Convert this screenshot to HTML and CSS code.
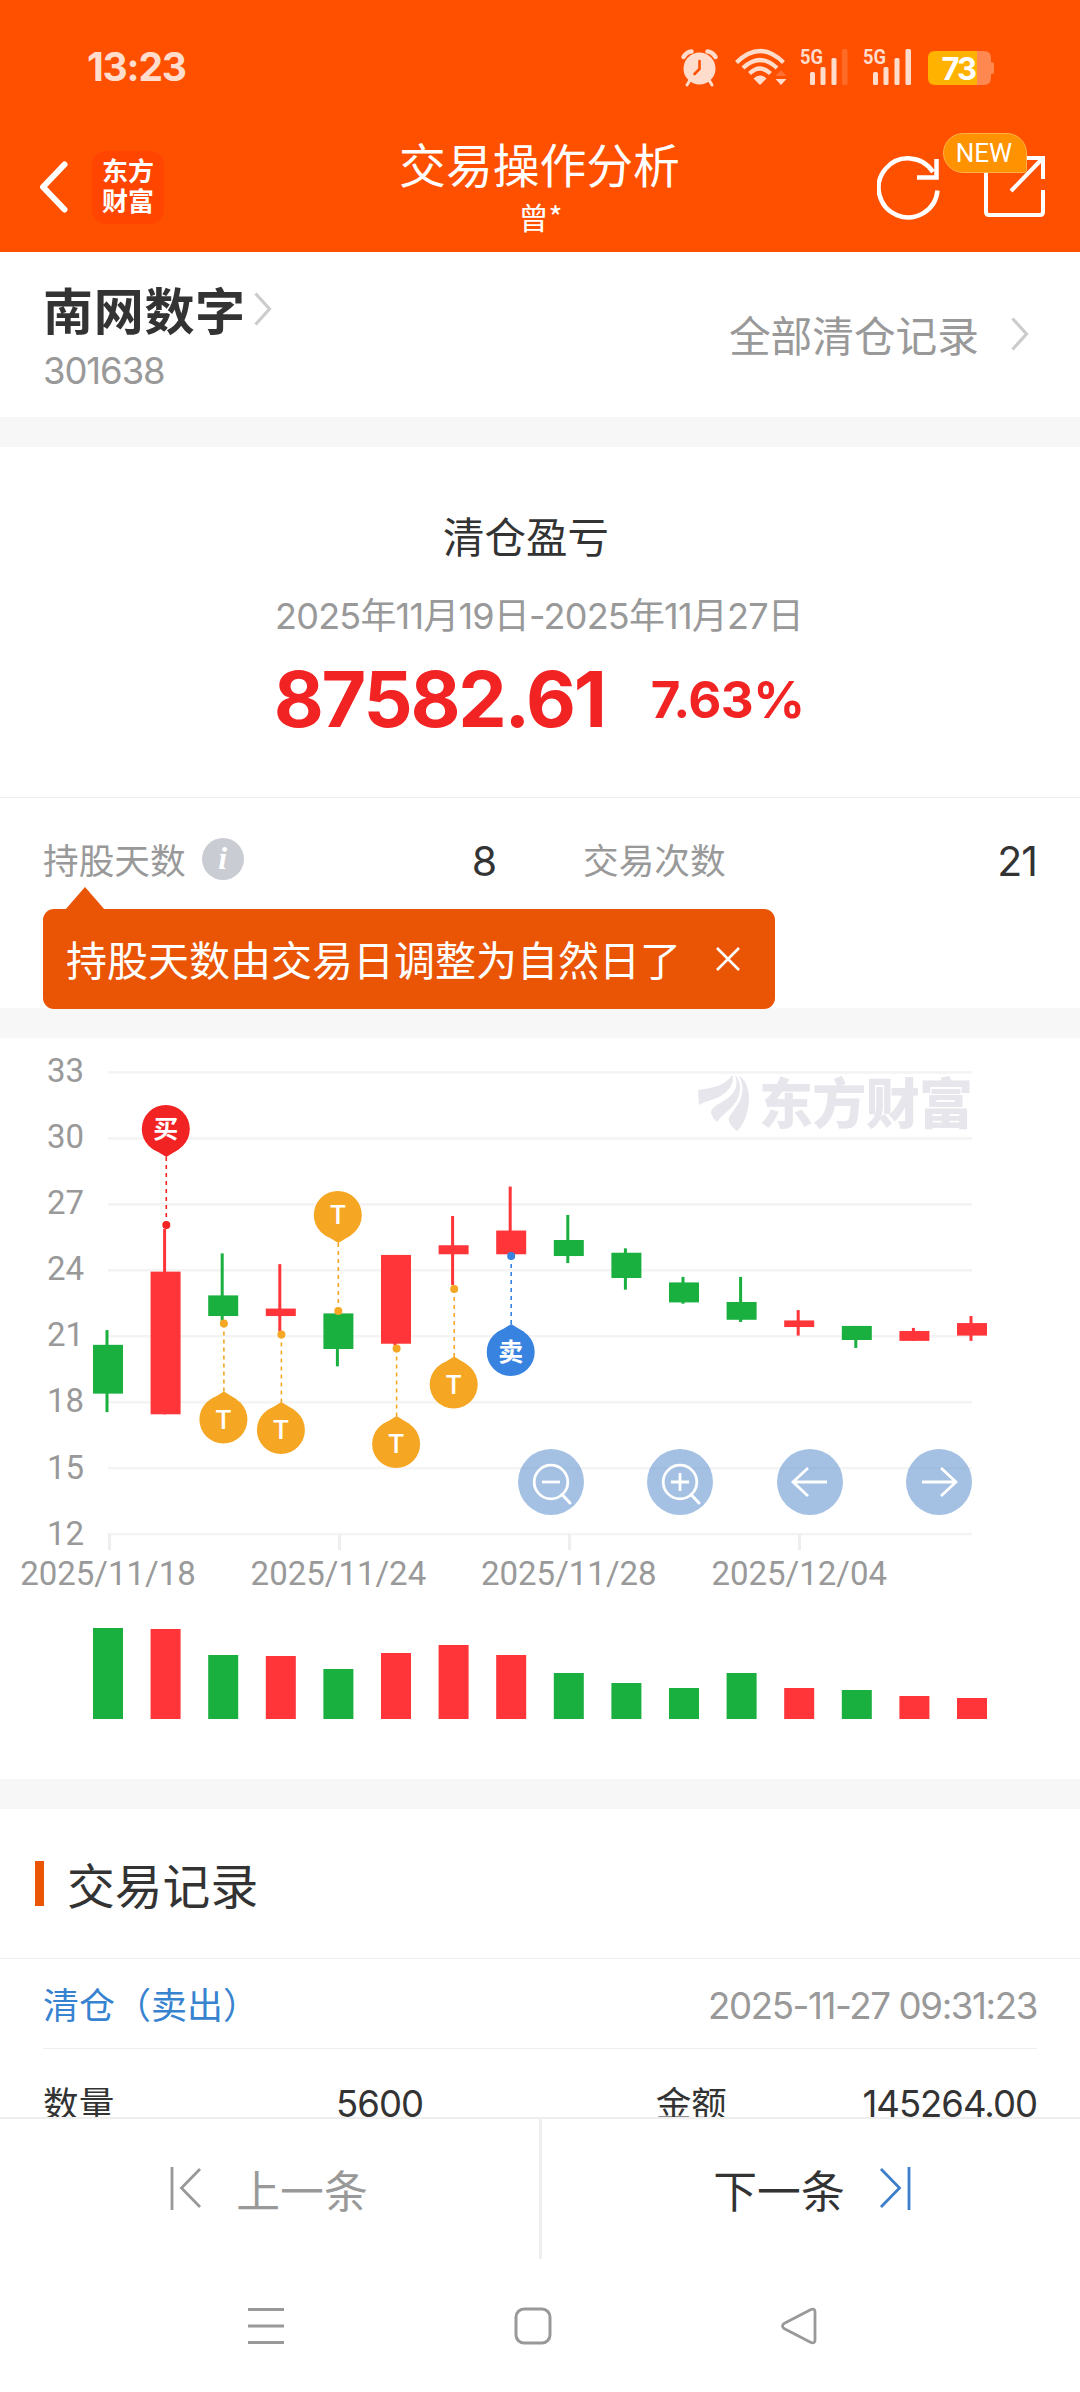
FILE: index.html
```
<!DOCTYPE html>
<html lang="zh-CN">

<head>
    <meta charset="UTF-8">
    <meta name="viewport" content="width=device-width, initial-scale=1.0">
    <title>交易操作分析</title>
    <link rel="stylesheet" href="styles.css">
</head>

<body>
    <div class="page">
        <header class="header">
            <div class="statusbar">
                <span class="time">13:23</span>
                <svg class="status-icons" width="320" height="60" viewBox="670 40 320 60">
                    <!-- alarm -->
                    <g fill="#ffdccc">
                        <circle cx="699.5" cy="68.5" r="16"/>
                        <path d="M683.500 57q3.500-5.500 8-5.500M715.500 57q-3.500-5.500-8-5.500" stroke="#ffdccc" stroke-width="4.500" fill="none" stroke-linecap="round"/>
                        <path d="M690 80l-3 5M709 80l3 5" stroke="#ffdccc" stroke-width="3" stroke-linecap="round"/>
                        <path d="M699.5 61v8l-5 5" stroke="#ff5000" stroke-width="2.6" fill="none" stroke-linecap="round"/>
                    </g>
                    <!-- wifi -->
                    <g fill="none" stroke="#ffdccc" stroke-width="4.2">
                        <path d="M736.5 62.5q23.500-23 47 0"/>
                        <path d="M743 68q17-16 34 0"/>
                        <path d="M749.500 73.500q10.500-10 21 0"/>
                    </g>
                    <path d="M753.500 78.500q6.500-6 13 0l-6.500 6.500z" fill="#ffdccc"/>
                    <path d="M775.500 76h11l-5.500-6z" fill="#ff7033"/>
                    <path d="M775.500 79h11l-5.500 6z" fill="#ffdccc"/>
                    <!-- signal -->
                    <g fill="#ffdccc">
                        <rect x="810" y="72" width="5" height="13" rx="1.500"/>
                        <rect x="820.500" y="67" width="5" height="18" rx="1.500"/>
                        <rect x="831.500" y="58" width="5" height="27" rx="1.500"/>
                        <rect x="842" y="49" width="5.500" height="36" rx="1.500" fill="#ff6a26"/>
                        <rect x="873" y="72" width="5" height="13" rx="1.500"/>
                        <rect x="883.500" y="67" width="5" height="18" rx="1.500"/>
                        <rect x="894.500" y="58" width="5" height="27" rx="1.500"/>
                        <rect x="905.500" y="49" width="5.500" height="36" rx="1.500"/>
                        <text class="net" x="800" y="63.500" textLength="23" lengthAdjust="spacingAndGlyphs">5G</text>
                        <text class="net" x="863" y="63.500" textLength="23" lengthAdjust="spacingAndGlyphs">5G</text>
                    </g>
                    <!-- battery -->
                    <path d="M977 51h7q7 0 7 7v4q3 0 3 2v8q0 2-3 2v4q0 7-7 7h-7z" fill="#ff8850"/>
                    <path d="M977 51h-42q-7 0-7 7v20q0 7 7 7h42z" fill="#ffb300"/>
                    <text class="battery" x="941.500" y="79.500">73</text>
                </svg>
            </div>
            <div class="navbar">
                <div class="nav-left">
                    <svg width="32" height="56" viewBox="0 0 32 56"><path d="M25.500 5.500L4 28l21.500 22.500" fill="none" stroke="#fff" stroke-width="6" stroke-linecap="round" stroke-linejoin="round"/></svg>
                    <div class="logo">东方<br>财富</div>
                </div>
                <div class="nav-title">
                    <h1>交易操作分析</h1>
                    <p>曾*</p>
                </div>
                <div class="nav-right">
                    <svg width="64" height="66" viewBox="0 0 64 66" fill="none" stroke="#fff" stroke-width="4.500">
                        <path d="M60.500 36.500A29.500 29.500 0 1 1 56 18M59.500 5v18.500H40"/>
                    </svg>
                    <div class="share">
                        <svg width="64" height="66" viewBox="0 0 64 66" fill="none" stroke="#fff" stroke-width="4">
                            <path d="M4 4v54q0 3 3 3h51q3 0 3-3V36M45 4h16v21M61 4L29 37"/>
                        </svg>
                        <span class="badge">NEW</span>
                    </div>
                </div>
            </div>
        </header>

        <section class="stock">
            <div>
                <div class="stock-name">南网数字
                    <svg width="18" height="34" viewBox="0 0 18 34"><path d="M1.500 1.500L15.500 17 1.500 32.500" fill="none" stroke="#ccc" stroke-width="3.200"/></svg>
                </div>
                <div class="stock-code">301638</div>
            </div>
            <div class="all-records">全部清仓记录
                <svg width="18" height="34" viewBox="0 0 18 34"><path d="M1.500 1.500L15.500 17 1.500 32.500" fill="none" stroke="#ccc" stroke-width="3.200"/></svg>
            </div>
        </section>

        <section class="summary">
            <div class="profit">
                <h2>清仓盈亏</h2>
                <p class="range">2025年11月19日-2025年11月27日</p>
                <p class="amount"><b>87582.61</b><strong>7.63%</strong></p>
            </div>
            <div class="stats">
                <div class="stat"><span>持股天数</span><i class="info">i</i><em>8</em></div>
                <div class="stat"><span>交易次数</span><em>21</em></div>
            </div>
            <div class="tip">
                <span>持股天数由交易日调整为自然日了</span>
                <svg width="26" height="26" viewBox="0 0 26 26"><path d="M2 2l22 22M24 2L2 24" stroke="#fff" stroke-width="2.600"/></svg>
            </div>
        </section>

        <section class="chart">
            <svg id="kline" width="1080" height="741" viewBox="0 0 1080 741"></svg>
        </section>

        <section class="records">
            <h3>交易记录</h3>
            <div class="record">
                <div class="record-head"><span>清仓（卖出）</span><time>2025-11-27 09:31:23</time></div>
                <div class="record-body">
                    <span>数量</span><span class="num">5600</span>
                    <span class="label">金额</span><span class="num">145264.00</span>
                </div>
            </div>
        </section>

        <footer class="pager">
            <div class="prev">
                <svg width="32" height="44" viewBox="0 0 32 44" fill="none" stroke="#999" stroke-width="2.800"><path d="M2 0v43M30 2L11.500 21 30 40"/></svg>
                <span>上一条</span>
            </div>
            <div class="next">
                <span>下一条</span>
                <svg width="32" height="44" viewBox="0 0 32 44" fill="none" stroke="#3d7fcc" stroke-width="2.800"><path d="M30 0v43M2 2l18.500 19L2 40"/></svg>
            </div>
        </footer>

        <nav class="sysbar">
            <svg width="38" height="38" viewBox="0 0 38 38" stroke="#999" stroke-width="3"><path d="M1 2.500h36M1 19h36M1 35.500h36"/></svg>
            <svg width="38" height="38" viewBox="0 0 38 38" fill="none" stroke="#999" stroke-width="3"><rect x="2" y="2" width="34" height="34" rx="8"/></svg>
            <svg width="38" height="38" viewBox="0 0 38 38" fill="none" stroke="#999" stroke-width="2.800" stroke-linejoin="round"><path d="M31 2.500Q35 1 35 5v28q0 4-4 2.500L4 21.500q-3-2.500 0-5z"/></svg>
        </nav>
    </div>
    <script>
        var RED = "#ff3539", GREEN = "#1ab040", ORANGE = "#f5a623" ;
        // color, high, body top, body bottom, low, volume height
        var days = [
            [GREEN, 21.28, 20.61, 18.39, 17.55, 91],
            [RED, 25.88, 23.94, 17.45, 17.45, 90],
            [GREEN, 24.77, 22.86, 21.92, 21.65, 64],
            [RED, 24.28, 22.26, 21.92, 21.22, 63],
            [GREEN, 22.04, 22.04, 20.42, 19.63, 50],
            [RED, 24.70, 24.70, 20.66, 20.58, 66],
            [RED, 26.47, 25.14, 24.73, 23.33, 74],
            [RED, 27.81, 25.81, 24.73, 24.73, 64],
            [GREEN, 26.52, 25.38, 24.65, 24.33, 46],
            [GREEN, 25.00, 24.80, 23.65, 23.12, 36],
            [GREEN, 23.70, 23.45, 22.54, 22.48, 31],
            [GREEN, 23.70, 22.56, 21.75, 21.65, 46],
            [RED, 22.19, 21.72, 21.42, 21.03, 31],
            [GREEN, 21.47, 21.47, 20.83, 20.47, 29],
            [RED, 21.38, 21.24, 20.79, 20.79, 23],
            [RED, 21.92, 21.60, 21.03, 20.79, 21]
        ] ;
        // x, y of the traded price, y of the pin tip, color, text
        var pins = [
            [166.3, 187, 118, "#f22323", "买"],
            [223.9, 285.5, 354.5, ORANGE, "T"],
            [281.4, 296.5, 365, ORANGE, "T"],
            [338.3, 273, 204, ORANGE, "T"],
            [396.6, 310.5, 379, ORANGE, "T"],
            [454.2, 251, 319.5, ORANGE, "T"],
            [511.2, 218, 287, "#3783df", "卖"]
        ] ;
        function y(price) {
            return 34.5 + (33 - price) * 21.98 ;
        }
        var svg = "" ;
        for (var p = 33; p >= 12; p -= 3) {
            svg += "<rect x='108' y='" + (y(p) - 1.3) + "' width='864' height='2.600' fill='#f4f4f4'/>" ;
            svg += "<text class='axis' x='84' y='" + (43.5 + (33 - p) * 22.06) + "' text-anchor='end'>" + p + "</text>" ;
        }
        var dates = ["2025/11/18", "2025/11/24", "2025/11/28", "2025/12/04"] ;
        for (var i in dates) {
            svg += "<rect x='" + (108 + i * 230) + "' y='496' width='3' height='16' fill='#eee'/>" ;
            svg += "<text class='axis' x='" + (108 + i * 230.4) + "' y='547' text-anchor='middle'>" + dates[i] + "</text>" ;
        }
        // watermark
        svg += "<g fill='#e6e6ec'><path d='M698 52C715 50 727 46 732 37C735 44 730 52 722 57C715 62 708 62 699 67Z'/>"
            + "<path d='M735 37C739 48 735 54 728 60C720 66 712 68 711 74Q712 80 717 84C722 76 734 70 738 60C742 50 740 42 735 37Z'/>"
            + "<path d='M738 37C746 42 749 50 749 62C748 76 744 86 737 93Q729 87 728.500 81C731 75 738 68 741 60C744 50 742 42 738 37Z'/>"
            + "<text class='brand' x='759' y='86' textLength='214'>东方财富</text></g>" ;
        for (var i = 0; i < days.length; i++) {
            var d = days[i], x = 93 + i * 57.6 ;
            svg += "<g fill='" + d[0] + "'>"
                + "<rect x='" + (x + 12.5) + "' y='" + y(d[1]) + "' width='3' height='" + (y(d[4]) - y(d[1])) + "'/>"
                + "<rect x='" + x + "' y='" + y(d[2]) + "' width='30' height='" + (y(d[3]) - y(d[2])) + "'/>"
                + "<rect x='" + x + "' y='" + (681 - d[5]) + "' width='30' height='" + d[5] + "'/></g>" ;
        }
        for (var i in pins) {
            var m = pins[i], down = m[2] < m[1] ;
            var s = down ? -1 : 1, cy = m[2] + s * 27 ;
            svg += "<g fill='" + m[3] + "'><path d='M" + m[0] + " " + m[1] + "V" + m[2] + "' stroke='" + m[3] + "' stroke-width='1.600' stroke-dasharray='4 4'/>"
                + "<circle cx='" + m[0] + "' cy='" + m[1] + "' r='4'/>"
                + "<circle cx='" + (m[0] - .5) + "' cy='" + cy + "' r='24'/>"
                + "<path d='M" + m[0] + " " + (m[2] - s) + "l-13 " + s * 8 + "h26z'/></g>"
                + "<text class='" + (m[4] == "T" ? "pin-t" : "pin-cn") + "' x='" + (m[0] - .5) + "' y='" + (cy + 9) + "' text-anchor='middle'>" + m[4] + "</text>" ;
        }
        var tools = [
            [551, "M-9 0H9"],
            [680, "M-9 0H9M0-9V9"],
            [810, "M17 0H-16M-2-14L-17 0L-2 14"],
            [939, "M-17 0H16M2-14L17 0L2 14"]
        ] ;
        for (var i in tools) {
            svg += "<g transform='translate(" + tools[i][0] + " 444)'><circle r='33' fill='#4983c7' fill-opacity='.5'/>"
                + "<path d='" + tools[i][1] + "' fill='none' stroke='#fff' stroke-width='2.800'/>" ;
            if (i < 2) {
                svg += "<circle r='16.800' fill='none' stroke='#fff' stroke-width='2.800'/><path d='M11 12.500L19 21' stroke='#fff' stroke-width='3' stroke-linecap='round'/>" ;
            }
            svg += "</g>" ;
        }
        document.getElementById("kline").innerHTML = svg ;
    </script>
</body>

</html>
```
FILE: styles.css
```
* {
    margin: 0;
    padding: 0;
    box-sizing: border-box;
}

body {
    font-family: "Noto Sans CJK SC", sans-serif;
    color: #333;
    background-color: #f7f7f7;
}

svg {
    display: block;
    flex-shrink: 0;
}

.time, .stock-code, .range, .amount, .stat em, .record-head time, .num {
    font-family: Inter, "Noto Sans CJK SC", sans-serif;
}

.page {
    display: flex;
    flex-direction: column;
    width: 1080px;
    height: 2392px;
    overflow: hidden;
}

.header {
    height: 252px;
    background-color: #ff5000;
    color: white;
}

.statusbar {
    display: flex;
    justify-content: space-between;
    align-items: center;
    height: 116px;
    padding: 24px 84px 0 87px;
}

.time {
    color: #ffdccc;
    font-size: 39px;
    font-weight: bold;
    line-height: 60px;
    letter-spacing: -1.2px;
    margin-top: -6px;
}

.status-icons {
    overflow: visible;
    margin-right: 6px;
}

.net {
    font: bold 21px Roboto, sans-serif;
}

.battery {
    font: bold 31px Inter, sans-serif;
    fill: white;
    letter-spacing: -2px;
}

.navbar {
    display: grid;
    grid-template-columns: 1fr auto 1fr;
    align-items: center;
    height: 136px;
    padding: 10px 34px 0 39px;
}

.nav-left {
    display: flex;
    align-items: center;
    gap: 21px;
    margin-bottom: 4px;
}

.logo {
    width: 72px;
    height: 73px;
    padding-top: 4px;
    border-radius: 14px;
    background-color: #ff4500;
    font-size: 26px;
    font-weight: bold;
    line-height: 30px;
    text-align: center;
}

.nav-title {
    margin-bottom: 3px;
    padding-right: 6px;
    text-align: center;
}

.nav-title h1 {
    font-size: 46.8px;
    font-weight: normal;
    line-height: 56px;
}

.nav-title p {
    padding-left: 2px;
    font-size: 30px;
    line-height: 50px;
}

.nav-right {
    display: flex;
    justify-content: flex-end;
    gap: 41px;
    margin-bottom: 5px;
}

.share {
    position: relative;
}

.badge {
    position: absolute;
    left: -39px;
    top: -21px;
    width: 84px;
    height: 40px;
    padding-right: 2px;
    border: 1.5px solid #ffae4a;
    border-radius: 20px 20px 3px 20px;
    background-color: #ff9200;
    font: 26px/38px Roboto, sans-serif;
    text-align: center;
}

.stock {
    display: flex;
    justify-content: space-between;
    height: 165px;
    padding: 26px 51px 0 43px;
    background-color: white;
}

.stock-name {
    display: flex;
    gap: 8px;
    font-size: 50px;
    font-weight: bold;
    line-height: 60px;
    letter-spacing: 0.7px;
}

.stock-name svg {
    margin-top: 14px;
}

.stock-code {
    margin-top: 10px;
    color: #999;
    font-size: 36.5px;
    line-height: 46px;
    letter-spacing: -1.1px;
}

.all-records {
    display: flex;
    align-items: center;
    gap: 32px;
    height: 60px;
    margin-top: 26px;
    color: #999;
    font-size: 41.7px;
}

.summary {
    height: 561px;
    margin-top: 30px;
    background-color: white;
}

.profit {
    height: 351px;
    padding-top: 60px;
    border-bottom: 1px solid #eee;
    text-align: center;
}

.profit h2 {
    padding-right: 28px;
    font-size: 41.5px;
    font-weight: normal;
    line-height: 56px;
}

.range {
    margin-top: 28px;
    padding-right: 2px;
    color: #999;
    font-size: 36px;
    line-height: 50px;
    letter-spacing: -0.8px;
}

.amount {
    display: flex;
    justify-content: center;
    align-items: center;
    gap: 46px;
    height: 86px;
    margin-top: 15px;
    padding-right: 2px;
    color: #f22323;
}

.amount b {
    font-size: 77px;
    letter-spacing: -2.2px;
}

.amount strong {
    font-size: 51px;
    letter-spacing: -0.6px;
}

.stats {
    display: grid;
    grid-template-columns: 1fr 1fr;
    padding: 0 43px;
    height: 111px;
}

.stat {
    display: flex;
    align-items: center;
    height: 121px;
    font-size: 35.7px;
    color: #999;
}

.stat:first-child {
    padding-right: 44px;
}

.stat:last-child {
    padding-left: 43px;
}

.stat em {
    margin-left: auto;
    padding-top: 4px;
    color: #333;
    font-size: 41px;
    font-style: normal;
    letter-spacing: -1px;
}

.info {
    width: 42px;
    height: 42px;
    margin-left: 16px;
    border-radius: 50%;
    background-color: #c9ccd2;
    color: white;
    font: italic bold 32px/40px "Liberation Serif", serif;
    text-align: center;
}

.tip {
    position: relative;
    display: flex;
    justify-content: space-between;
    align-items: center;
    width: 732px;
    height: 100px;
    margin-left: 43px;
    padding: 0 34px 0 23px;
    border-radius: 11px;
    background-color: #e95504;
    color: white;
    font-size: 41px;
}

.tip span {
    margin-top: -2px;
}

.tip::before {
    content: "";
    position: absolute;
    left: 22px;
    top: -22px;
    border: 20px solid transparent;
    border-top: 0;
    border-bottom: 23px solid #e95504;
}

.chart {
    height: 741px;
    margin: 30px 0;
    background-color: white;
}

.axis {
    font: 33px Roboto, sans-serif;
    fill: #999;
}

.brand {
    font-size: 54px;
    font-weight: 900;
}

.pin-t {
    font: 500 26px Roboto, sans-serif;
    fill: white;
}

.pin-cn {
    font-size: 25px;
    font-weight: bold;
    fill: white;
}

.records {
    flex: 1;
    min-height: 0;
    overflow: hidden;
    background-color: white;
}

.records h3 {
    display: flex;
    align-items: center;
    gap: 23px;
    height: 150px;
    padding-left: 35px;
    border-bottom: 1px solid #eee;
    font-size: 47.8px;
    font-weight: normal;
    line-height: 60px;
}

.records h3::before {
    content: "";
    width: 9px;
    height: 45px;
    background-color: #e95504;
}

.record {
    margin: 0 43px;
}

.record-head {
    display: flex;
    justify-content: space-between;
    align-items: center;
    height: 90px;
    border-bottom: 1px solid #eee;
    color: #3783d0;
    font-size: 36px;
}

.record-head span {
    margin-top: -2px;
}

.record-head time {
    padding-top: 3px;
    color: #999;
    font-size: 36.7px;
    letter-spacing: -1.4px;
}

.record-body {
    display: grid;
    grid-template-columns: 190px 190px 1fr 1fr;
    align-items: center;
    height: 105px;
    font-size: 35.7px;
}

.num {
    padding-top: 4px;
    font-size: 36.5px;
    letter-spacing: -1px;
    text-align: right;
    white-space: nowrap;
}

.label {
    padding-right: 3px;
    text-align: right;
}

.pager {
    display: grid;
    grid-template-columns: 542px 1fr;
    height: 142px;
    border-top: 2px solid #eee;
    background-color: white;
    font-size: 43.8px;
}

.prev, .next {
    display: flex;
    justify-content: center;
    align-items: center;
    gap: 34px;
}

.prev {
    padding-right: 1px;
    border-right: 3px solid #eee;
    color: #999;
}

.next {
    padding-left: 2px;
}

.sysbar {
    display: flex;
    justify-content: space-between;
    height: 133px;
    padding: 48px 262px 0 247px;
    background-color: white;
}
```
